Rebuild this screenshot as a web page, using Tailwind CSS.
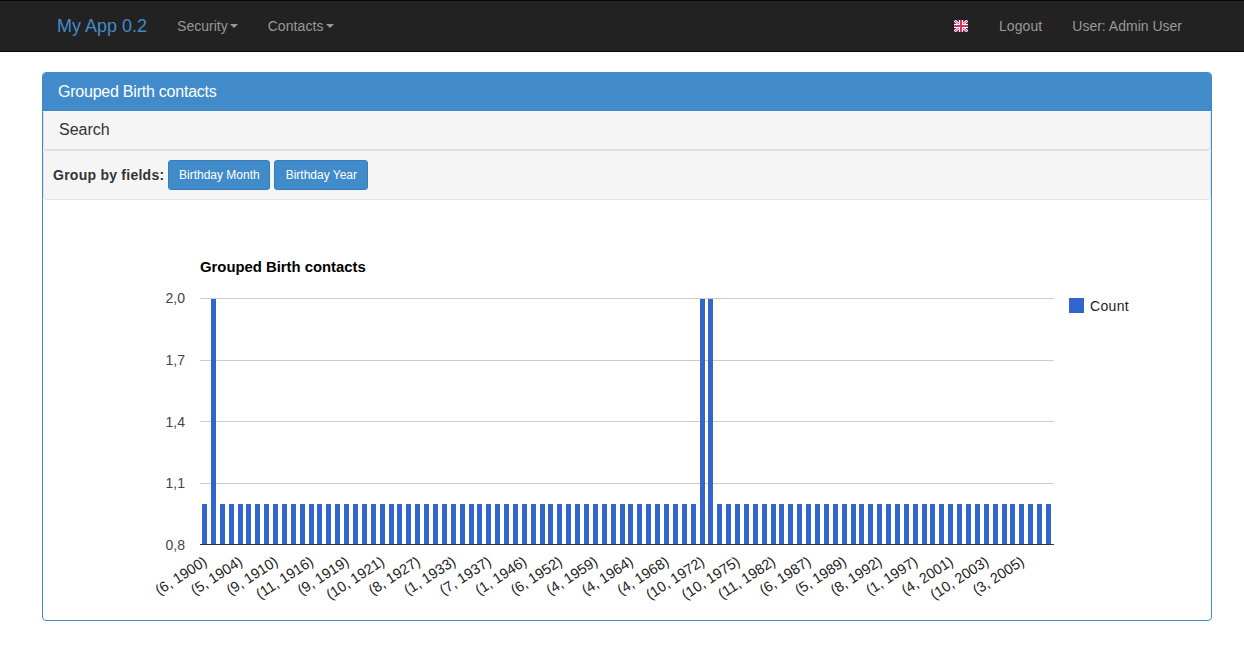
<!DOCTYPE html>
<html lang="en">
<head>
    <meta charset="UTF-8">
    <title>Grouped Birth contacts</title>
    <script src="https://cdn.jsdelivr.net/npm/@tailwindcss/browser@4"></script>
</head>

<body class="bg-white font-['Liberation_Sans',Arial,sans-serif] text-sm text-[#333] h-[651px] overflow-hidden">
    <nav class="h-[52px] bg-[#222] border-y border-[#080808] flex items-center justify-between pl-[57px] pr-[62px]">
        <div class="flex items-center">
            <a href="#" class="text-lg text-[#428bca] mr-[30px]">My App 0.2</a>
            <a href="#" class="text-[#999] flex items-center mr-[30px]">Security<span class="ml-[2px] border-x-4 border-t-4 border-x-transparent border-t-[#999]"></span></a>
            <a href="#" class="text-[#999] flex items-center tracking-[0.1px]">Contacts<span class="ml-[2px] border-x-4 border-t-4 border-x-transparent border-t-[#999]"></span></a>
        </div>
        <div class="flex items-center">
            <svg class="w-[14px] h-[12px] mr-[31px]" viewBox="0 0 14 12">
                <rect width="14" height="12" fill="#2f3a8f"/>
                <path d="M0 0L14 12M14 0L0 12" stroke="#fff" stroke-width="2.6"/>
                <path d="M0 0L14 12M14 0L0 12" stroke="#e0304f" stroke-width="1"/>
                <path d="M7 0V12M0 6H14" stroke="#fff" stroke-width="4"/>
                <path d="M7 0V12M0 6H14" stroke="#e0304f" stroke-width="2"/>
            </svg>
            <a href="#" class="text-[#999] mr-[30px] tracking-[0.1px]">Logout</a>
            <a href="#" class="text-[#999]">User: Admin User</a>
        </div>
    </nav>

    <div class="mt-5 ml-[42px] mr-[32px] h-[549px] border border-[#428bca] rounded overflow-hidden">
        <div class="h-[38px] bg-[#428bca] text-white text-base tracking-[-0.23px] flex items-center px-[15px]">Grouped Birth contacts</div>
        <div class="h-[39px] bg-[#f5f5f5] border border-t-0 border-[#ddd] rounded-[3px] shadow-[0_1px_1px_rgba(0,0,0,0.05)] text-base flex items-center px-[15px]">Search</div>
        <div class="h-[50px] bg-[#f5f5f5] border border-[#e3e3e3] rounded-[3px] flex items-center pl-[9px] gap-1">
            <span class="font-bold tracking-[0.25px]">Group by fields:</span>
            <button class="h-[30px] w-[102px] bg-[#428bca] border border-[#357ebd] rounded-[3px] text-white text-xs">Birthday Month</button>
            <button class="h-[30px] w-[94px] bg-[#428bca] border border-[#357ebd] rounded-[3px] text-white text-xs">Birthday Year</button>
        </div>
        <svg id="chart" class="block" width="1168" height="420" viewBox="43 200 1168 420" font-family="'Liberation Sans', Arial, sans-serif" font-size="14">
            <text x="200" y="272" font-size="14.85" font-weight="bold" fill="#000">Grouped Birth contacts</text>
            <g stroke="#ccc" stroke-width="1">
                <path d="M200 298.5H1054M200 360.5H1054M200 421.5H1054M200 483.5H1054"/>
            </g>
            <g fill="#444" text-anchor="end">
                <text x="185" y="303">2,0</text>
                <text x="185" y="365">1,7</text>
                <text x="185" y="427">1,4</text>
                <text x="185" y="488">1,1</text>
                <text x="185" y="550">0,8</text>
            </g>
            <g id="bars" fill="#3366cc"></g>
            <path d="M200 544.5H1054" stroke="#333" stroke-width="1"/>
            <g id="labels" fill="#222" text-anchor="end" font-size="14.5"></g>
            <rect x="1069" y="298" width="15" height="15" fill="#3366cc"/>
            <text x="1090" y="311" fill="#222" letter-spacing="0.35">Count</text>
        </svg>
    </div>

    <script>
        const labels = ['(6, 1900)', '(5, 1904)', '(9, 1910)', '(11, 1916)', '(9, 1919)', '(10, 1921)', '(8, 1927)', '(1, 1933)',
            '(7, 1937)', '(1, 1946)', '(6, 1952)', '(4, 1959)', '(4, 1964)', '(4, 1968)', '(10, 1972)', '(10, 1975)',
            '(11, 1982)', '(6, 1987)', '(5, 1989)', '(8, 1992)', '(1, 1997)', '(4, 2001)', '(10, 2003)', '(3, 2005)'];
        const tall = [1, 56, 57];
        const pitch = 8.884;
        let bars = '';
        for (let i = 0; i < 96; i++) {
            const x = Math.round(202 + i * pitch);
            const y = tall.includes(i) ? 299 : 504;
            bars += `<rect x="${x}" y="${y}" width="5" height="${544 - y}"/>`;
        }
        document.getElementById('bars').innerHTML = bars;
        document.getElementById('labels').innerHTML = labels.map((text, i) => {
            const x = 208 + i * pitch * 4;
            return `<text x="${x}" y="564" transform="rotate(-33 ${x} 564)">${text}</text>`;
        }).join('');
    </script>
</body>
</html>
